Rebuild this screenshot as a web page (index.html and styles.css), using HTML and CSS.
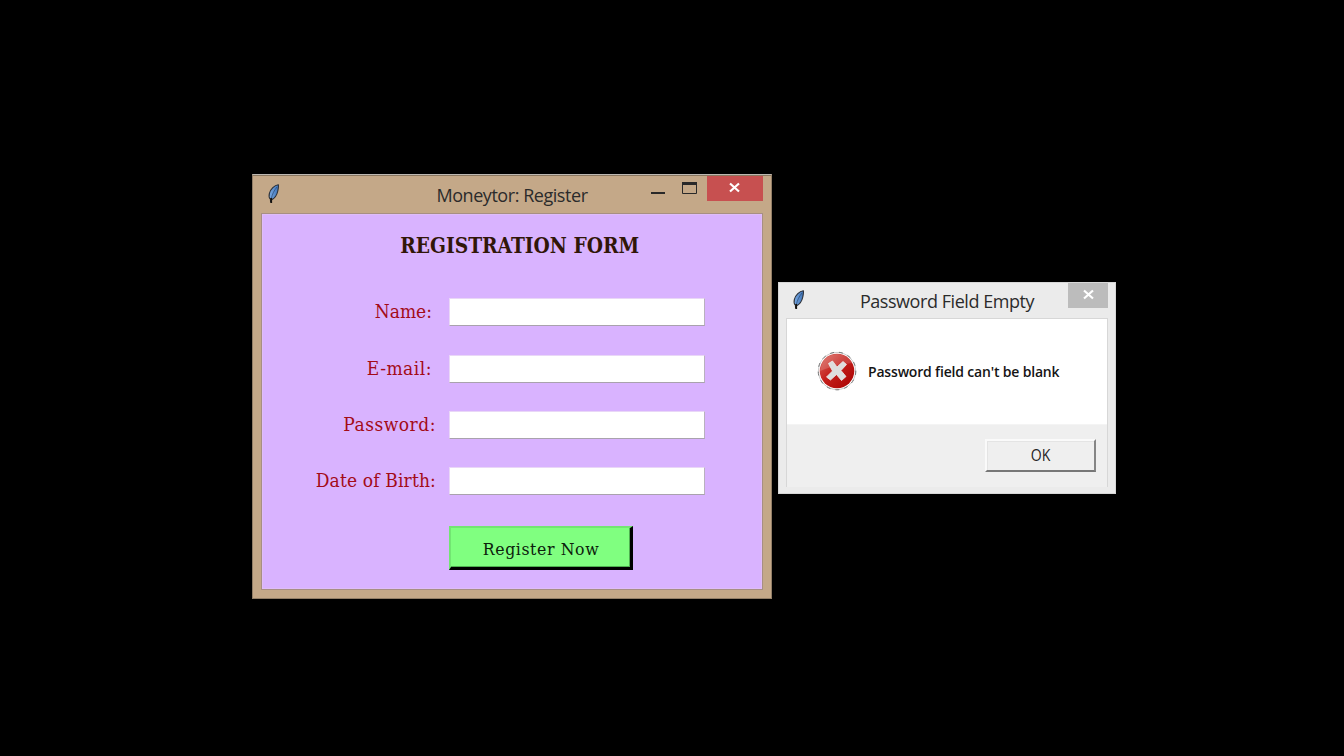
FILE: index.html
```html
<!DOCTYPE html>
<html lang="en">
<head>
<meta charset="utf-8">
<title>Moneytor: Register</title>
<link rel="stylesheet" href="styles.css">
</head>
<body>
<svg width="0" height="0" class="defs">
  <defs>
    <linearGradient id="blue" x1="0" x2="1"><stop offset="0" stop-color="#79a9e2"/><stop offset="1" stop-color="#3f74b8"/></linearGradient>
    <linearGradient id="red" x1="0" y1="0" x2="1" y2="1"><stop offset="0" stop-color="#dc6a60"/><stop offset=".45" stop-color="#c4201c"/><stop offset="1" stop-color="#a80000"/></linearGradient>
    <symbol id="feather" viewBox="0 0 14 20">
      <path d="M11.300.8C7.500 1.300 3.500 5 2.400 9.300c-.6 2.400-.2 4.700 1 5.800l.2 3 1-2.300c3.200-1.600 5.400-5 6.200-8.800.5-2.500 1-4.800.5-6.200z" fill="url(#blue)" stroke="#2c3038" stroke-width="1.100"/>
      <path d="M10 3C7 6.500 5.200 10.500 4.200 15" fill="none" stroke="#28466f" stroke-width=".7"/>
      <path d="M4.200 14v5" stroke="#15120f" stroke-width="1.800"/>
    </symbol>
  </defs>
</svg>
<main class="desktop">
  <section class="window register">
    <header class="titlebar">
      <svg class="feather"><use href="#feather"/></svg>
      <h1 class="title">Moneytor: Register</h1>
      <div class="controls">
        <svg width="112" height="25" viewBox="0 0 112 25">
          <path d="M0 17h14" stroke="#292929" stroke-width="2"/>
          <path d="M31.500 7v10.500h14V7" fill="none" stroke="#292929"/>
          <path d="M31 7.500h15" stroke="#292929" stroke-width="3"/>
          <path d="M56 0h56v25H56z" fill="#c75050"/>
          <path d="M79 7.500l9 8M88 7.500l-9 8" stroke="#fff" stroke-width="2.200"/>
        </svg>
      </div>
    </header>
    <form class="client">
      <h2 class="heading"><span>REGISTRATION FORM</span></h2>
      <div class="row"><label class="label short" for="name">Name:</label><input class="field" id="name"></div>
      <div class="row"><label class="label short wide" for="email">E-mail:</label><input class="field" id="email"></div>
      <div class="row"><label class="label wide" for="password">Password:</label><input class="field" id="password" type="password"></div>
      <div class="row"><label class="label roomy" for="dob">Date of Birth:</label><input class="field" id="dob"></div>
      <button class="submit" type="button">Register Now</button>
    </form>
  </section>
  <section class="window dialog">
    <header class="titlebar">
      <svg class="feather"><use href="#feather"/></svg>
      <h1 class="title">Password Field Empty</h1>
      <div class="controls">
        <svg width="40" height="25" viewBox="0 0 40 25"><path d="M0 0h40v25H0z" fill="#bcbcbc"/><path d="M16 7.500l9 8M25 7.500l-9 8" stroke="#fff" stroke-width="2.200"/></svg>
      </div>
    </header>
    <div class="body">
      <div class="message">
        <svg class="error" viewBox="0 0 40 40">
          <circle cx="20" cy="20" r="18.600" fill="#fff" stroke="#ccc"/>
          <circle cx="20" cy="20" r="18.800" fill="none" stroke="#777" stroke-dasharray="4 5"/>
          <circle cx="20" cy="20" r="17.300" fill="url(#red)"/>
          <path d="M3 20C5 9 10 4 20 3c7 0 13 4 15 9-9 1-19 3-32 8z" fill="#fff" opacity=".16"/>
          <path d="M11.500 12.500l4-2.500 4.500 6 6-5.500 3.500 3-5.500 6 5 6-4.500 4-5-6-6 5.500-4-3 6-6z" fill="#dedede" stroke="#eee" stroke-width=".8" stroke-linejoin="round"/>
        </svg>
        <p class="text">Password field can't be blank</p>
      </div>
      <div class="actions"><button class="ok" type="button"><span>OK</span></button></div>
    </div>
  </section>
</main>
</body>
</html>
```
FILE: styles.css
```css
* { box-sizing: border-box; }
body { margin: 0; background: #000; overflow: hidden; }
.defs { position: absolute; }
.desktop { position: relative; width: 1344px; height: 756px; background: #000; }
.window { position: absolute; }
.register {
  left: 252px; top: 174px; width: 520px; height: 425px;
  padding: 0 8px 8px; background: #c4a888;
  border: 1px solid #927e67; border-top: 1px solid #bdb8b2;
  box-shadow: inset 0 1px #8a7760;
}
.dialog {
  left: 778px; top: 282px; width: 338px; height: 212px;
  padding: 0 7px 6px; background: #ebebeb; border: 1px solid #d7d7d7;
}
.titlebar { position: relative; display: flex; justify-content: center; height: 38px; }
.dialog .titlebar { height: 35px; }
.title {
  margin: 0; padding-top: 6px;
  font: 400 18px/28px "Open Sans", "Noto Sans", sans-serif;
  color: #2b2b2b; white-space: nowrap; letter-spacing: -.45px;
}
.dialog .title { padding-top: 4px; }
.feather { position: absolute; left: 6px; top: 9px; width: 14px; height: 20px; }
.dialog .feather { top: 7px; left: 6px; }
.controls { position: absolute; right: 0; top: 1px; height: 25px; }
.dialog .controls { top: 0; }
.controls svg { display: block; }
.client {
  height: 377px; padding: 0; background: #d9b3ff;
  border: 1px solid #a78f83; box-shadow: inset 0 0 0 1px #dfbdf8;
  font-family: "DejaVu Serif Condensed", "DejaVu Serif", serif;
}
.heading {
  display: flex; justify-content: center;
  margin: 0; height: 70.400px; padding: 18px 0 0 16px;
  font: 700 21.500px/28px "DejaVu Serif Condensed", "DejaVu Serif", serif; color: #311608;
  white-space: nowrap;
}
.heading span { transform: scaleX(.965); }
.row { display: flex; height: 56.200px; padding-top: 14px; }
.label {
  width: 174px; margin-right: 13px; height: 28px; text-align: right;
  font-size: 19px; line-height: 27px; color: #a30b18; white-space: nowrap;
}
.short { padding-right: 4px; }
.wide { letter-spacing: .5px; }
.roomy { letter-spacing: .15px; }
.field {
  width: 256px; height: 28px; padding: 2px 6px; background: #fff; font: inherit;
  border: 1px solid #e9d7f7; border-bottom: 1px solid #a9a2ad; border-right-color: #b9b1be; outline: 0;
}
.submit {
  display: block; width: 184px; height: 44px; margin: 16.700px 0 0 187px; padding: 4px 0 0 1px;
  background: #80ff80; color: #0c210c; text-align: center;
  border: 2px solid #72e572; border-right: 3px solid #000; border-bottom: 3px solid #000;
  box-shadow: inset -1px -1px #4eaf50;
  font: 17.500px/30px "DejaVu Serif Condensed", "DejaVu Serif", serif; letter-spacing: .6px;
}
.body { height: 169px; border: 1px solid #d7d7d7; border-bottom: 0; background: #efefef; }
.message { height: 106px; display: flex; align-items: center; padding: 0 0 2px 30px; background: #fff; border-bottom: 1px solid #f4f4f4; }
.error { width: 40px; height: 40px; margin-right: 11px; }
.text { margin: 0; padding-top: 2px; font: 600 14px/20px "Open Sans", sans-serif; letter-spacing: -.18px; color: #151515; white-space: nowrap; }
.actions { display: flex; justify-content: flex-end; padding: 14px 11px 0 0; }
.ok {
  width: 111px; height: 33px; padding: 0; background: #efefef; color: #252525;
  border: 2px solid #fafafa; border-right-color: #858585; border-bottom-color: #777;
  box-shadow: inset 1px 1px #e4e4e4; font: 16px/26px "Open Sans", sans-serif;
}
.ok span { display: block; transform: translateY(-1px) scaleX(.88); }
```
